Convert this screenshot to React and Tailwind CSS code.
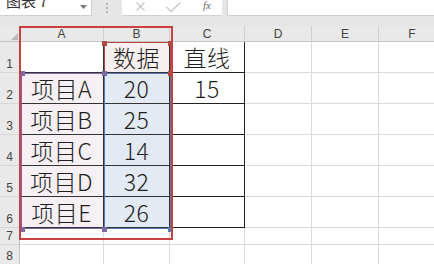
import React from "react";

const rows = [
  { n: 1, a: "", b: "数据", c: "直线" },
  { n: 2, a: "项目A", b: "20", c: "15" },
  { n: 3, a: "项目B", b: "25", c: "" },
  { n: 4, a: "项目C", b: "14", c: "" },
  { n: 5, a: "项目D", b: "32", c: "" },
  { n: 6, a: "项目E", b: "26", c: "" },
];

const cols = ["A", "B", "C", "D", "E", "F"];

const Handle = ({ className }) => (
  <div className={`absolute w-[5px] h-[5px] ${className}`} />
);

const RowHead = ({ n, h }) => (
  <div
    className={`${h} flex items-end justify-center pb-[1px] bg-[#e9e9e9] border-r border-b border-r-[#c4c4c4] border-b-[#d6d6d6] text-[12px] leading-[14px] text-[#444] font-['Liberation_Sans',sans-serif]`}
  >
    {n}
  </div>
);

const Cell = ({ children, className }) => (
  <div
    className={`h-[31px] flex items-end justify-center text-[23px] leading-[29px] tracking-[0.5px] font-light text-[#1e1e1e] ${className}`}
  >
    {children}
  </div>
);

export default function App() {
  return (
    <div className="relative w-[434px] h-[264px] overflow-hidden bg-[#e6e6e6] font-['Noto_Sans_CJK_SC',sans-serif]">
      {/* formula bar */}
      <div className="flex h-[26px] items-start">
        <div className="w-[92px] h-[16px] flex items-start justify-between pl-[6px] pr-[4px] bg-white border-r border-b border-[#d0d0d0] overflow-hidden">
          <span className="mt-[-7px] text-[15px] leading-[16px] text-[#333]">图表 7</span>
          <svg className="mt-[5px]" width="7" height="4" viewBox="0 0 7 4">
            <path d="M0 0 H7 L3.5 4 Z" fill="#777" />
          </svg>
        </div>
        <div className="w-[30px] h-[16px] flex flex-col items-center justify-center gap-[2px]">
          <div className="w-[2px] h-[2px] bg-[#b4b4b4]" />
          <div className="w-[2px] h-[2px] bg-[#b4b4b4]" />
          <div className="w-[2px] h-[2px] bg-[#b4b4b4]" />
        </div>
        <div className="w-[100px] h-[16px] flex items-start pl-[13px] pt-[1px] bg-white border-b border-[#d0d0d0]">
          <svg width="11" height="11" viewBox="0 0 11 11">
            <path d="M1.5 1.5 L9.5 9.5 M9.5 1.5 L1.5 9.5" stroke="#c8c8c8" strokeWidth="1.3" />
          </svg>
          <svg className="ml-[19px]" width="17" height="12" viewBox="0 0 17 12">
            <path d="M1.5 6 L6 10.5 L15.5 1.5" stroke="#c8c8c8" strokeWidth="1.3" fill="none" />
          </svg>
          <span className="ml-[21px] mt-[-2px] text-[11px] leading-[12px] italic text-[#666] font-['Liberation_Serif',serif]">
            fx
          </span>
        </div>
        <div className="w-[5px]" />
        <div className="flex-1 h-[16px] bg-white border-l border-b border-[#d0d0d0]" />
      </div>

      {/* sheet */}
      <div className="grid grid-cols-[20px_84px_66px_75px_67px_67px_67px] bg-white">
        <div className="h-[16px] flex items-end justify-end p-[1px] bg-[#e9e9e9] border-r border-b border-[#c4c4c4]">
          <svg width="7" height="7" viewBox="0 0 7 7">
            <path d="M7 0 V7 H0 Z" fill="#b8b8b8" />
          </svg>
        </div>
        {cols.map((c) => (
          <div
            key={c}
            className="h-[16px] flex items-center justify-center bg-[#e9e9e9] border-r border-b border-r-[#d0d0d0] border-b-[#c4c4c4] text-[12px] leading-[14px] text-[#444] font-['Liberation_Sans',sans-serif]"
          >
            {c}
          </div>
        ))}

        {rows.map((r) => (
          <React.Fragment key={r.n}>
            <RowHead n={r.n} h="h-[31px]" />
            <Cell className={`border-r border-b border-[#333] ${r.n === 1 ? "bg-white" : "bg-[#f6f0f4]"}`}>
              {r.a}
            </Cell>
            <Cell className={`border-r border-b border-[#333] ${r.n === 1 ? "bg-[#f8f0f0]" : "bg-[#e3eaf4]"}`}>
              {r.b}
            </Cell>
            <Cell className="border-r border-b border-[#222]">{r.c}</Cell>
            <div className="h-[31px] border-r border-b border-[#dadada]" />
            <div className="h-[31px] border-r border-b border-[#dadada]" />
            <div className="h-[31px] border-r border-b border-[#dadada]" />
          </React.Fragment>
        ))}

        {[7, 8].map((n) => (
          <React.Fragment key={n}>
            <RowHead n={n} h={n === 7 ? "h-[17px]" : "h-[20px]"} />
            {[0, 1, 2, 3, 4, 5].map((i) => (
              <div key={i} className="border-r border-b border-[#dadada]" />
            ))}
          </React.Fragment>
        ))}
      </div>

      {/* chart data range outlines */}
      <div className="absolute left-[104px] top-[42px] w-[67px] h-[32px] border border-[#b04a48]" />
      <div className="absolute left-[21px] top-[73px] w-[84px] h-[156px] border border-[#7f68a6]" />
      <div className="absolute left-[104px] top-[73px] w-[67px] h-[156px] border border-[#4f7fb5]" />
      <Handle className="left-[102px] top-[41px] bg-[#b04a48]" />
      <Handle className="left-[168px] top-[41px] bg-[#b04a48]" />
      <Handle className="left-[168px] top-[71px] bg-[#b04a48]" />
      <Handle className="left-[102px] top-[71px] bg-[#7f68a6]" />
      <Handle className="left-[20px] top-[71px] bg-[#7f68a6]" />
      <Handle className="left-[20px] top-[227px] bg-[#7f68a6]" />
      <Handle className="left-[102px] top-[227px] bg-[#7f68a6]" />
      <Handle className="left-[168px] top-[227px] bg-[#4f7fb5]" />

      {/* chart selection frame */}
      <div className="absolute left-[19px] top-[26px] w-[154px] h-[214px] border-2 border-[#c8403f]" />
    </div>
  );
}
